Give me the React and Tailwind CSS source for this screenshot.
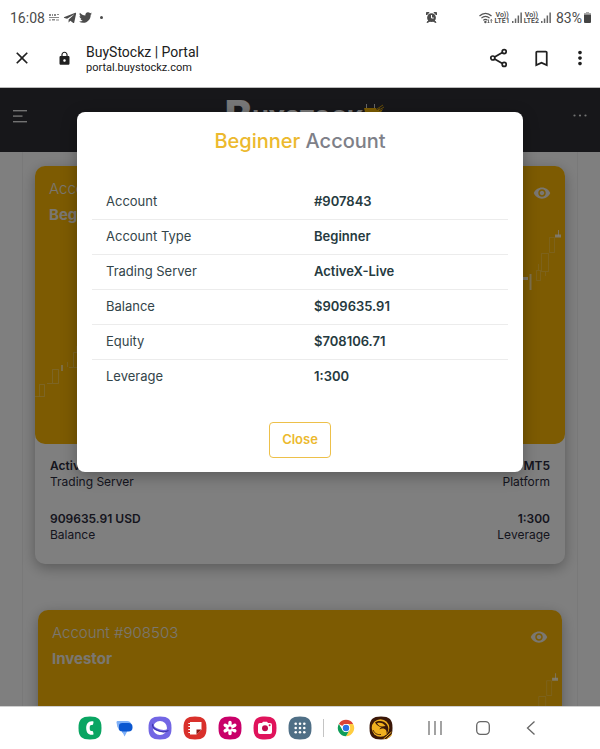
import React, { useState } from 'react';
import { FaTelegramPlane, FaTwitter } from 'react-icons/fa';
import { MdLock, MdBookmarkBorder, MdMoreVert, MdClose, MdVisibility } from 'react-icons/md';

const accounts = [
  {
    number: '#907843',
    type: 'Beginner',
    server: 'ActiveX-Live',
    platform: 'MT5',
    balance: '909635.91',
    equity: '708106.71',
    leverage: '1:300',
    spacing: 'mx-3',
  },
  {
    number: '#908503',
    type: 'Investor',
    server: 'ActiveX-Live',
    platform: 'MT5',
    balance: '0.00',
    equity: '0.00',
    leverage: '1:300',
    spacing: 'mx-[15px]',
  },
];

const SignalBars = () => (
  <svg className="w-[10px] h-[11px]" viewBox="0 0 10 11" fill="#666">
    <rect x="0" y="9" width="1.5" height="2" />
    <rect x="2.8" y="6.5" width="1.5" height="4.5" />
    <rect x="5.6" y="3.5" width="1.5" height="7.5" />
    <rect x="8.4" y="0.5" width="1.5" height="10.5" />
  </svg>
);

const Volte = ({ sim }) => (
  <span className="flex flex-col items-center text-[7px] leading-[6px] font-semibold">
    <span>Vo))</span>
    <span>LTE{sim}</span>
  </span>
);

const StatusBar = () => (
  <div className="flex h-[35px] shrink-0 items-center justify-between pl-[10px] pr-[9px] text-[#4b4b4b]">
    <div className="flex items-center">
      <span className="text-sm">16:08</span>
      <svg className="ml-1 h-[7px] w-[10px]" viewBox="0 0 10 7" fill="#888">
        <path d="M0 0h2v2H0zM3 0h1v2H3zM5 0h2v2H5zM8 0h2v1H8zM0 3h10v1H0zM0 5.5h2v1H0zM3 5h3v1.5H3zM7 5.5h3v1H7z" />
      </svg>
      <FaTelegramPlane className="ml-1 h-[14px] w-[14px]" />
      <FaTwitter className="ml-[2px] h-[13px] w-[13px]" />
      <span className="ml-2 h-[3px] w-[3px] rounded-full bg-[#4b4b4b]" />
    </div>
    <div className="flex items-center gap-[2px]">
      <svg className="mr-10 h-[11px] w-[11px]" viewBox="0 0 11 11">
        <path d="M0.500 3V0.500H3zM8 0.500h2.500V3zM1 10.500l1.500-2 1 1zM10 10.500l-1.500-2-1 1z" fill="#4b4b4b" stroke="#4b4b4b" />
        <circle cx="5.500" cy="5.700" r="4.400" fill="#4b4b4b" />
        <path d="M5.500 3v3h2.200" fill="none" stroke="#fff" strokeWidth="1" />
      </svg>
      <svg className="h-[12px] w-[14px]" viewBox="0 0 14 12" fill="none" stroke="#555" strokeWidth="1.2">
        <path d="M0.5 4C4 0.4 9 0.4 12.5 4M2.4 6.2c2.4-2.4 5.8-2.4 8.2 0M4.3 8.3c1.3-1.3 3-1.3 4.2 0" />
        <circle cx="6.4" cy="10" r="0.6" />
        <path d="M9.5 7.5v3.5M8.6 10l.9 1 .9-1M12.3 11V7.5M11.4 8.5l.9-1 .9 1" strokeWidth="0.8" />
      </svg>
      <Volte sim="1" />
      <SignalBars />
      <Volte sim="2" />
      <SignalBars />
      <span className="ml-[3px] text-sm">83%</span>
      <svg className="h-[11px] w-[7px]" viewBox="0 0 7 11">
        <path d="M2 0h3v1h2v3H0V1h2z" fill="#aaa" />
        <path d="M0 2.8h7V10a1 1 0 0 1-1 1H1a1 1 0 0 1-1-1z" fill="#444" />
      </svg>
    </div>
  </div>
);

const BrowserBar = () => (
  <div className="flex h-[53px] shrink-0 items-center border-b border-[#bbb] pb-[6px] pl-3 pr-[9px] text-[#202020]">
    <button aria-label="Close tab"><MdClose className="h-5 w-5" /></button>
    <MdLock className="ml-[25px] h-[15px] w-[15px]" />
    <div className="ml-[14px] flex-1 pt-px">
      <div className="text-sm leading-[18px]">BuyStockz | Portal</div>
      <div className="text-[11px] leading-[14px]">portal.buystockz.com</div>
    </div>
    <div className="flex items-center gap-[22px]">
      <button aria-label="Share">
        <svg className="h-5 w-5" viewBox="0 0 20 20" fill="none" stroke="currentColor" strokeWidth="1.7">
          <path d="M5.6 9l7.8-4.6M5.6 11l7.8 4.6" />
          <circle cx="3.8" cy="10" r="2" />
          <circle cx="15.2" cy="3.6" r="2" />
          <circle cx="15.2" cy="16.4" r="2" />
        </svg>
      </button>
      <button aria-label="Bookmark"><MdBookmarkBorder className="h-[21px] w-[21px]" /></button>
      <button aria-label="More" className="-ml-[5px]"><MdMoreVert className="h-[22px] w-[22px]" /></button>
    </div>
  </div>
);

const Logo = () => (
  <div className="flex items-start pt-[7px] pl-[10px] font-extrabold text-[#f0f0f0]">
    <span className="text-[42px] leading-[42px]">B</span>
    <span className="pt-3 text-[22px] leading-[22px]">UYSTOCK</span>
    <svg className="mt-[9px] h-[20px] w-[22px]" viewBox="0 0 22 20">
      <path d="M1 4h12l1 2 3-2-1 3 4-2-3 5-4 8H6L3 12z" fill="#f9b804" />
      <path d="M3.5 0v4M11.5 0v4" stroke="#cfcfcf" strokeWidth="1" />
      <path d="M14 5l6-4M16 6l5-3" stroke="#f9b804" strokeWidth="0.8" />
    </svg>
  </div>
);

const PortalNav = () => (
  <div className="flex h-16 items-start justify-between bg-[#2e2f35] px-[13px]">
    <button aria-label="Menu" className="mt-[22px]">
      <svg className="h-[13px] w-[14px]" viewBox="0 0 14 13" fill="#e4e4e4">
        <rect width="14" height="1.4" />
        <rect y="5.4" width="9.5" height="1.4" />
        <rect y="11" width="14" height="1.4" />
      </svg>
    </button>
    <Logo />
    <button aria-label="Options" className="mt-[26px]">
      <svg className="h-[3px] w-[14px]" viewBox="0 0 14 3" fill="#e4e4e4">
        <circle cx="1.5" cy="1.5" r="1.1" />
        <circle cx="7" cy="1.5" r="1.1" />
        <circle cx="12.5" cy="1.5" r="1.1" />
      </svg>
    </button>
  </div>
);

// Faint candlesticks across the card header
const Candles = () => (
  <svg className="absolute inset-x-0 top-0 w-full" viewBox="0 0 530 278" fill="none" stroke="#fff" strokeOpacity="0.28">
    <path d="M0 230.5h4.5M4.5 218.5h5v12h-5zM12 217.5h5M17.5 203.5h6v14h-6zM32.5 196v5M34 201.5h4M38.5 186.5h6v15h-6zM42 180v6" />
    <path d="M27 199v6" strokeWidth="1.5" strokeOpacity="0.7" />
    <path d="M501.500 104.500h4v10h-4zM503.500 98v6M506.500 87.500h7v18h-7zM510.500 106v4M514.500 71.500h5v15h-5z" strokeOpacity="0.2" />
    <path d="M495.500 108v16" strokeWidth="2" strokeOpacity="0.6" />
    <path d="M487 112.500h6M520 70h6" strokeWidth="3" strokeOpacity="0.8" />
    <path d="M523.500 64v6" strokeOpacity="0.7" />
  </svg>
);

const AccountCard = ({ account }) => (
  <div className={`${account.spacing} rounded-[10px] bg-white shadow-[0_4px_14px_rgba(0,0,0,0.3)]`}>
    <div className="relative h-[278px] rounded-[10px] bg-[#fab604] px-[14px] pt-3 text-[#f4eee2]">
      <Candles />
      <div className="flex items-start justify-between">
        <div>
          <p className="text-[15px] leading-[22px] font-light">Account {account.number}</p>
          <h3 className="mt-[5px] text-[15px] leading-5 font-bold">{account.type}</h3>
        </div>
        <button aria-label="View account" className="relative mt-[6px]">
          <MdVisibility className="h-[18px] w-[18px]" />
        </button>
      </div>
    </div>
    <div className="grid grid-cols-2 gap-y-[21px] px-[15px] pt-[14px] pb-[21px] text-xs leading-4 text-[#2b2b3c]">
      <div>
        <p className="font-semibold">{account.server}</p>
        <p>Trading Server</p>
      </div>
      <div className="text-right">
        <p className="font-semibold">{account.platform}</p>
        <p>Platform</p>
      </div>
      <div>
        <p className="font-semibold">{account.balance} USD</p>
        <p>Balance</p>
      </div>
      <div className="text-right">
        <p className="font-semibold">{account.leverage}</p>
        <p>Leverage</p>
      </div>
    </div>
  </div>
);

const AccountModal = ({ account, onClose }) => {
  const rows = [
    { label: 'Account', value: account.number },
    { label: 'Account Type', value: account.type },
    { label: 'Trading Server', value: account.server },
    { label: 'Balance', value: `$${account.balance}` },
    { label: 'Equity', value: `$${account.equity}` },
    { label: 'Leverage', value: account.leverage },
  ];

  return (
    <div className="absolute inset-0 bg-black/50 px-4 pt-6">
      <div
        role="dialog"
        aria-labelledby="account-title"
        className="mx-auto flex w-full max-w-[446px] flex-col items-center rounded-lg bg-white px-[15px] pt-[14px] pb-[14px] shadow-[0_4px_16px_rgba(0,0,0,0.3)]"
      >
        <h2 id="account-title" className="text-xl leading-[30px] font-medium text-[#7e8088]">
          <span className="text-[#ecb92e]">{account.type}</span> Account
        </h2>
        <table className="mt-7 w-full table-fixed text-[13px] text-[#33454a]">
          <tbody>
            {rows.map((row) => (
              <tr key={row.label} className="h-[35px] border-b border-[#ececec] last:border-0">
                <th scope="row" className="px-[14px] text-left font-normal">{row.label}</th>
                <td className="px-[14px] font-semibold text-[#263a40]">{row.value}</td>
              </tr>
            ))}
          </tbody>
        </table>
        <button
          onClick={onClose}
          className="mt-7 h-9 rounded border border-[#edc04a] px-3 text-[13px] font-semibold text-[#ecb92e]"
        >
          Close
        </button>
      </div>
    </div>
  );
};

const Squircle = ({ fill, children }) => (
  <svg className="h-6 w-6" viewBox="0 0 24 24">
    <path d="M12 .5C20.500 .5 23.500 3.500 23.500 12S20.500 23.500 12 23.500 .5 20.500 .5 12 3.500 .5 12 .5z" fill={fill} />
    {children}
  </svg>
);

const dockApps = [
  {
    name: 'Phone',
    icon: (
      <Squircle fill="#0aa562">
        <path d="M14.800 5.200c-4.500-.6-6.600 2.500-6.600 6.800s2.100 7.400 6.600 6.800c.6-.1.800-.5.700-1.100l-.4-2c-.1-.6-.6-.9-1.200-.8-1.700.3-2.200-.8-2.200-2.900s.5-3.200 2.200-2.900c.6.1 1.100-.2 1.200-.8l.4-2c.1-.6-.1-1-.7-1.100z" fill="#fff" />
      </Squircle>
    ),
  },
  {
    name: 'Messages',
    icon: (
      <svg className="h-6 w-6" viewBox="0 0 24 24">
        <path d="M6.500 5H14c2.300 0 3.800 1.300 4 3H8c-2 0-3 1.500-3 4-.8-1-1-2-1-3L3.500 6.500C3.300 5.500 4 5 5 5z" fill="#7fb0f7" />
        <path d="M9 14h6l-3.500 6.500c-.7-1.500-1-3-2.500-4z" fill="#7fb0f7" />
        <rect x="5.500" y="7" width="14" height="8.600" rx="4" fill="#0b57d0" />
      </svg>
    ),
  },
  {
    name: 'Internet',
    icon: (
      <Squircle fill="#7266e4">
        <circle cx="12" cy="12" r="7" fill="#fff" />
        <path d="M5.500 8.500C2 11 12 17 20 14.500" fill="none" stroke="#7266e4" strokeWidth="2.400" />
        <path d="M5 8C2 11.500 13 18.500 20.500 14.500" fill="none" stroke="#3f35ad" strokeWidth="1.200" />
      </Squircle>
    ),
  },
  {
    name: 'Notes',
    icon: (
      <Squircle fill="#d9302b">
        <path d="M7 6h11.500v7.500L13.500 18.500H7z" fill="#fff" />
        <path d="M18.500 13.500h-5v5z" fill="#8d1512" />
        <path d="M5.300 7.500h2.500M5.300 10.500h2.500M5.300 13.500h2.500M5.300 16.500h2.500" stroke="#fff" strokeWidth="1.200" />
      </Squircle>
    ),
  },
  {
    name: 'Gallery',
    icon: (
      <Squircle fill="#c90069">
        <g stroke="#fff" strokeWidth="3.400" strokeLinecap="round">
          <path d="M12 6.500v11M7.200 9.200l9.600 5.600M16.800 9.200l-9.600 5.600" />
        </g>
        <circle cx="12" cy="12" r="1.600" fill="#c90069" />
      </Squircle>
    ),
  },
  {
    name: 'Camera',
    icon: (
      <Squircle fill="#e0135b">
        <path d="M7 7h2l1-1.200h4L15 7h2a2 2 0 0 1 2 2v7a2 2 0 0 1-2 2H7a2 2 0 0 1-2-2V9a2 2 0 0 1 2-2z" fill="#fff" />
        <circle cx="12" cy="12.300" r="3" fill="#c20c4c" />
        <circle cx="16.600" cy="9.200" r="1" fill="#e0135b" />
      </Squircle>
    ),
  },
  {
    name: 'Apps',
    icon: (
      <Squircle fill="#4f6f86">
        <g fill="#fff">
          {[7.7, 12, 16.3].map((y) =>
            [7.7, 12, 16.3].map((x) => <circle key={`${x}-${y}`} cx={x} cy={y} r="1.300" />)
          )}
        </g>
      </Squircle>
    ),
  },
];

const ChromeIcon = () => (
  <svg className="h-[18px] w-[18px]" viewBox="0 0 48 48">
    <circle cx="24" cy="24" r="22" fill="#fff" />
    <path d="M4.950 13A22 22 0 0 1 43.050 13H24a11 11 0 0 0-9.530 5.500z" fill="#db4437" />
    <path d="M43.050 13A22 22 0 0 1 24 46l9.530-16.500A11 11 0 0 0 33.530 18.500L30 13z" fill="#ffcd40" />
    <path d="M4.950 13A22 22 0 0 0 24 46l9.530-16.500A11 11 0 0 1 14.470 29.500z" fill="#0f9d58" />
    <circle cx="24" cy="24" r="10.500" fill="#fff" />
    <circle cx="24" cy="24" r="8.500" fill="#2a73e8" />
  </svg>
);

const BullIcon = () => (
  <Squircle fill="#3a1708">
    <circle cx="11.500" cy="12" r="8.800" fill="#f0b01f" />
    <path d="M6 6.500c4-2.500 9-1.500 11.500 1.500 2.500 3 2.500 7 0 10 .5-3-.5-5-3-5.500-1.500-.3-3 .2-4 1 .3-1.200 1-2 2.200-2.500-2.700-.2-4.700-1.500-6.700-4.500z" fill="#3a1708" />
    <path d="M8 7.200c3.500-1.200 6.500 0 8.500 2.800l-3.500.5c-2 0-3.500-1.200-5-3.300z" fill="#f0b01f" />
    <path d="M4 14c1.500 3.500 4.500 5 8 4.500" fill="none" stroke="#3a1708" strokeWidth="0.900" />
    <path d="M14.500 23l8-7M17.500 23l5.500-4.500" stroke="#f0b01f" strokeWidth="1" />
  </Squircle>
);

const Dock = () => (
  <div className="flex h-[43px] shrink-0 items-center border-t border-[#d0d0d0] pl-[78px] pr-[62px]">
    <div className="flex items-center gap-[11px]">
      {dockApps.map((app) => (
        <button key={app.name} aria-label={app.name}>{app.icon}</button>
      ))}
    </div>
    <span className="ml-[11px] h-[18px] w-px bg-[#c4c4c4]" />
    <button aria-label="Chrome" className="ml-[13px]"><ChromeIcon /></button>
    <button aria-label="BuyStockz" className="ml-[14px]"><BullIcon /></button>
    <div className="ml-auto flex items-center gap-[34px] text-[#666]">
      <button aria-label="Recents">
        <svg className="h-[14px] w-[14px]" viewBox="0 0 14 14" stroke="currentColor" strokeWidth="1.200">
          <path d="M1 0v14M7 0v14M13 0v14" />
        </svg>
      </button>
      <button aria-label="Home">
        <svg className="h-[14px] w-[14px]" viewBox="0 0 14 14" fill="none" stroke="currentColor" strokeWidth="1.300">
          <rect x="0.700" y="0.700" width="12.600" height="12.600" rx="3.800" />
        </svg>
      </button>
      <button aria-label="Back">
        <svg className="h-[14px] w-[14px]" viewBox="0 0 14 14" fill="none" stroke="currentColor" strokeWidth="1.300">
          <path d="M10.500 0.500L3.500 7l7 6.500" />
        </svg>
      </button>
    </div>
  </div>
);

const App = () => {
  const [selected, setSelected] = useState(accounts[0]);

  return (
    <div className="flex h-screen flex-col bg-white font-['Roboto',sans-serif]">
      <StatusBar />
      <BrowserBar />
      <main className="relative min-h-0 flex-1 overflow-hidden bg-white font-['Inter',sans-serif]">
        <PortalNav />
        <div className="mx-[22px] flex flex-col gap-[46px] border-x border-[#f2f2f2] pt-[14px]">
          {accounts.map((account) => (
            <AccountCard key={account.number} account={account} />
          ))}
        </div>
        {selected && <AccountModal account={selected} onClose={() => setSelected(null)} />}
      </main>
      <Dock />
    </div>
  );
};

export default App;
